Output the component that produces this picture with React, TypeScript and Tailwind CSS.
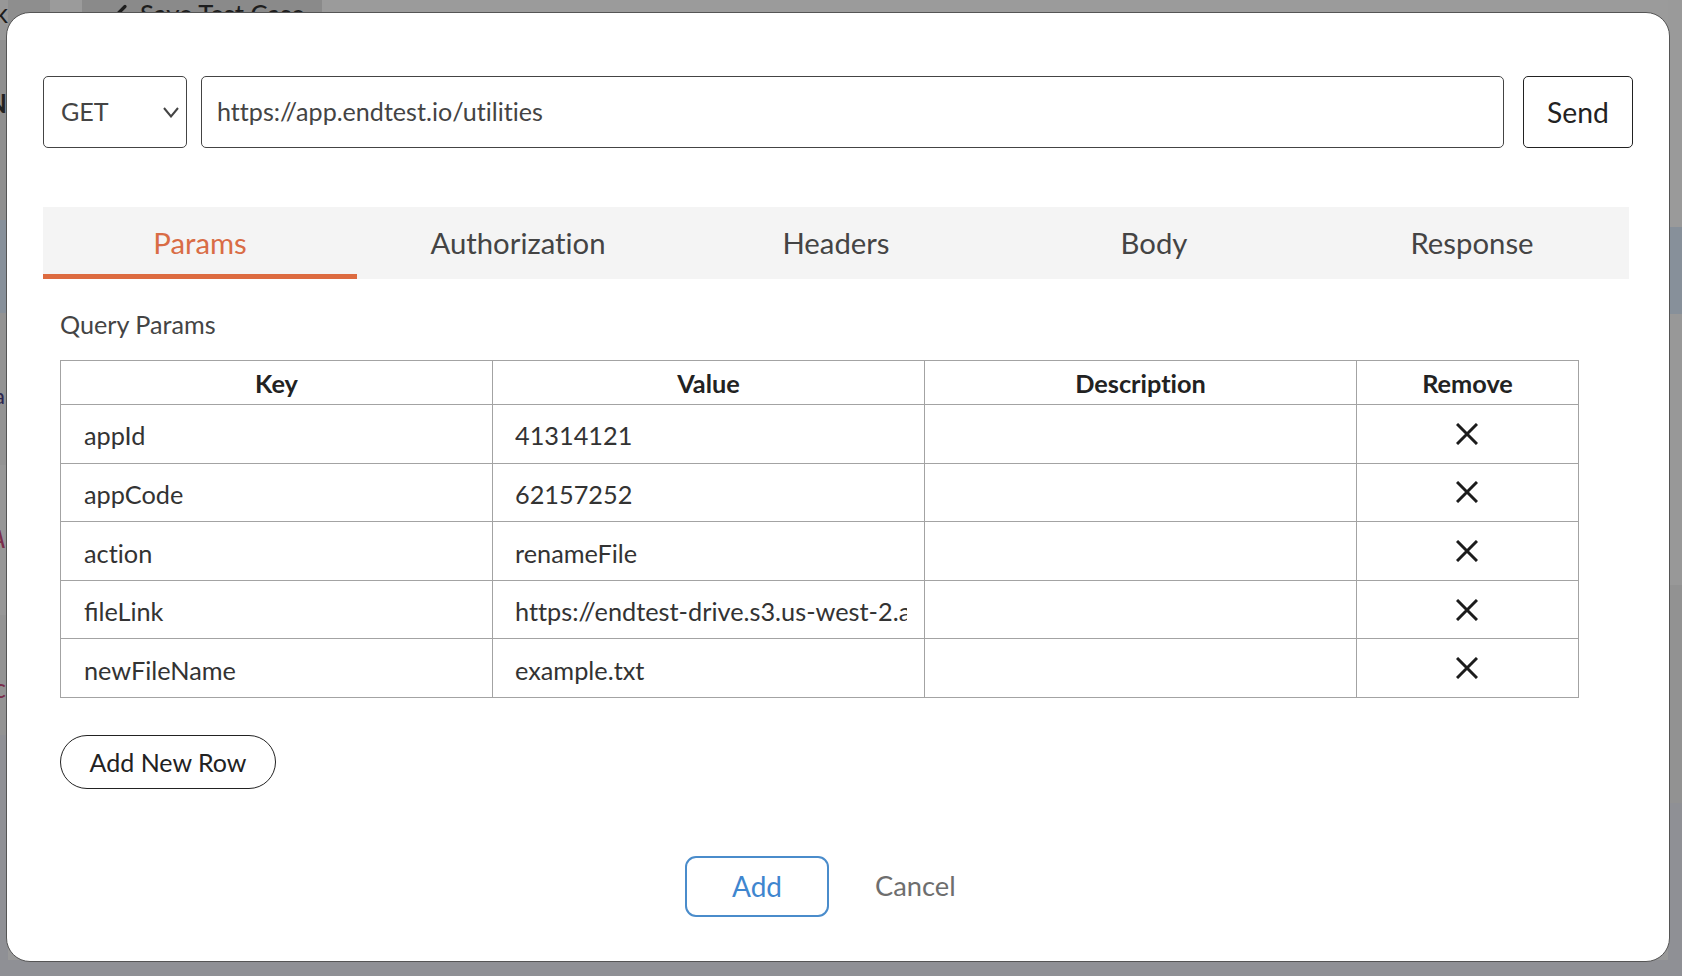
import { Check } from "lucide-react"

const font = "font-['Lato','Open_Sans',sans-serif] [font-variant-ligatures:no-common-ligatures]"

const tabs = ["Params", "Authorization", "Headers", "Body", "Response"]

const params = [
  { key: "appId", value: "41314121" },
  { key: "appCode", value: "62157252" },
  { key: "action", value: "renameFile" },
  { key: "fileLink", value: "https://endtest-drive.s3.us-west-2.amazonaws.com/example.txt" },
  { key: "newFileName", value: "example.txt" },
]

function RemoveIcon() {
  return (
    <svg viewBox="0 0 22 22" className="mx-auto block h-[22px] w-[22px]" fill="none" stroke="#1c1c1c" strokeWidth="3">
      <path d="M1 1 21 21M21 1 1 21" />
    </svg>
  )
}

function Backdrop() {
  return (
    <div className="flex h-full text-[26px] leading-none">
      <div className="flex w-[8px] flex-col overflow-hidden">
        <div className="flex h-[40px] justify-end bg-[#979797] text-[#1c1c1c]">
          <span>k</span>
        </div>
        <div className="flex h-[180px] justify-end bg-[#8f8f8f] pt-[50px] pr-[1px] font-bold text-[#222]">N</div>
        <div className="h-[93px] bg-[#87909a]" />
        <div className="flex h-[152px] justify-end bg-[#939393] pt-[72px] pr-[3px] text-[22px] text-[#2a2550]">a</div>
        <div className="flex h-[150px] justify-end bg-[#979797] pt-[60px] pr-[2px] text-[#7a2d4c] italic">A</div>
        <div className="flex h-[120px] justify-end bg-[#939393] pt-[60px] pr-[2px] text-[#7a2d4c]">c</div>
        <div className="flex-1 bg-[#8f9095]" />
      </div>
      <div className="flex flex-1 flex-col">
        <div className="flex h-[30px] bg-[#9b9b9b]">
          <div className="w-[42px] bg-[#8e8e8e]" />
          <div className="w-[32px]" />
          <div className="flex w-[240px] items-start gap-[10px] bg-[#8a8a8a] pl-[18px] text-[#1e1e1e]">
            <Check size={30} strokeWidth={2.6} className="-mt-[1px]" />
            <span className="pt-[1px] text-[25.5px] font-medium whitespace-nowrap">Save Test Case</span>
          </div>
        </div>
        <div className="flex-1" />
        <div className="h-[16px] bg-[#8f9095]" />
      </div>
      <div className="flex w-[14px] flex-col">
        <div className="h-[227px] bg-[#9a9a9a]" />
        <div className="h-[87px] bg-[#87909a]" />
        <div className="h-[271px] bg-[#989898]" />
        <div className="h-[218px] bg-[#929292]" />
        <div className="flex-1 bg-[#8f9095]" />
      </div>
    </div>
  )
}

export default function App() {
  return (
    <div className={`relative h-[976px] w-[1682px] overflow-hidden bg-[#999] ${font}`}>
      <Backdrop />

      <div className="absolute top-[12px] left-[6px] h-[950px] w-[1664px] rounded-[24px] border border-[#555] bg-white pt-[63px] pl-[36px]">
        <div className="flex h-[72px] items-stretch text-[25.1px] text-[#444]">
          <div className="relative w-[144px] rounded-[5px] border border-[#444]">
            <select
              defaultValue="GET"
              className="h-full w-full appearance-none bg-transparent pl-[17px] outline-none"
            >
              <option>GET</option>
              <option>POST</option>
            </select>
            <svg
              viewBox="0 0 16 11"
              className="pointer-events-none absolute top-[30px] right-[7px] h-[11px] w-[16px]"
              fill="none"
              stroke="#444"
              strokeWidth="2"
            >
              <path d="M1 1 8 9.5 15 1" />
            </svg>
          </div>
          <input
            readOnly
            value="https://app.endtest.io/utilities"
            className="ml-[14px] w-[1303px] rounded-[5px] border border-[#444] px-[15px] outline-none"
          />
          <button className="ml-[19px] w-[110px] rounded-[5px] border border-[#222] text-[28.3px] text-[#222]">Send</button>
        </div>

        <div className="mt-[59px] flex w-[1586px] gap-[4px] bg-[#f4f4f4]">
          {tabs.map((tab, i) => (
            <div
              key={tab}
              className={
                i === 0
                  ? "flex h-[72px] w-[314px] items-center justify-center border-b-[5px] border-[#dd6b40] pt-[5px] text-[29.3px] text-[#d96c45]"
                  : "flex h-[72px] w-[314px] items-center justify-center text-[29.3px] text-[#444]"
              }
            >
              {tab}
            </div>
          ))}
        </div>

        <div className="pl-[17px]">
          <div className="mt-[29px] text-[25.2px] leading-[33px] text-[#444]">Query Params</div>

          <table className="mt-[19px] w-[1519px] table-fixed border-collapse text-[25.3px] text-[#333]">
            <thead>
              <tr className="h-[44px]">
                <th className="w-[432px] border border-[#a3a3a3] pt-[2px] font-bold text-[#222]">Key</th>
                <th className="w-[432px] border border-[#a3a3a3] pt-[2px] font-bold text-[#222]">Value</th>
                <th className="w-[432px] border border-[#a3a3a3] pt-[2px] font-bold text-[#222]">Description</th>
                <th className="border border-[#a3a3a3] pt-[2px] font-bold text-[#222]">Remove</th>
              </tr>
            </thead>
            <tbody>
              {params.map((row) => (
                <tr key={row.key} className="h-[58.6px]">
                  <td className="border border-[#a3a3a3] pt-[5px] pl-[23px] [font-variant-ligatures:common-ligatures]">
                    {row.key === "action" ? <span className="[font-variant-ligatures:no-common-ligatures]">{row.key}</span> : row.key}
                  </td>
                  <td className="border border-[#a3a3a3] pt-[5px] pr-[17px] pl-[22px]">
                    <div className="overflow-hidden whitespace-nowrap">{row.value}</div>
                  </td>
                  <td className="border border-[#a3a3a3]" />
                  <td className="border border-[#a3a3a3] pr-[2px]">
                    <RemoveIcon />
                  </td>
                </tr>
              ))}
            </tbody>
          </table>

          <button className="mt-[37px] h-[54px] w-[216px] rounded-[27px] border border-[#222] bg-white pt-[2px] text-[25px] text-[#222]">
            Add New Row
          </button>
        </div>

        <div className="mt-[67px] flex h-[61px] items-center pl-[642px] text-[28px]">
          <button className="h-full w-[144px] rounded-[11px] border-2 border-[#4a8ccb] text-[#3f86cf]">Add</button>
          <button className="ml-[46px] text-[27.3px] text-[#6e6e6e]">Cancel</button>
        </div>
      </div>
    </div>
  )
}
